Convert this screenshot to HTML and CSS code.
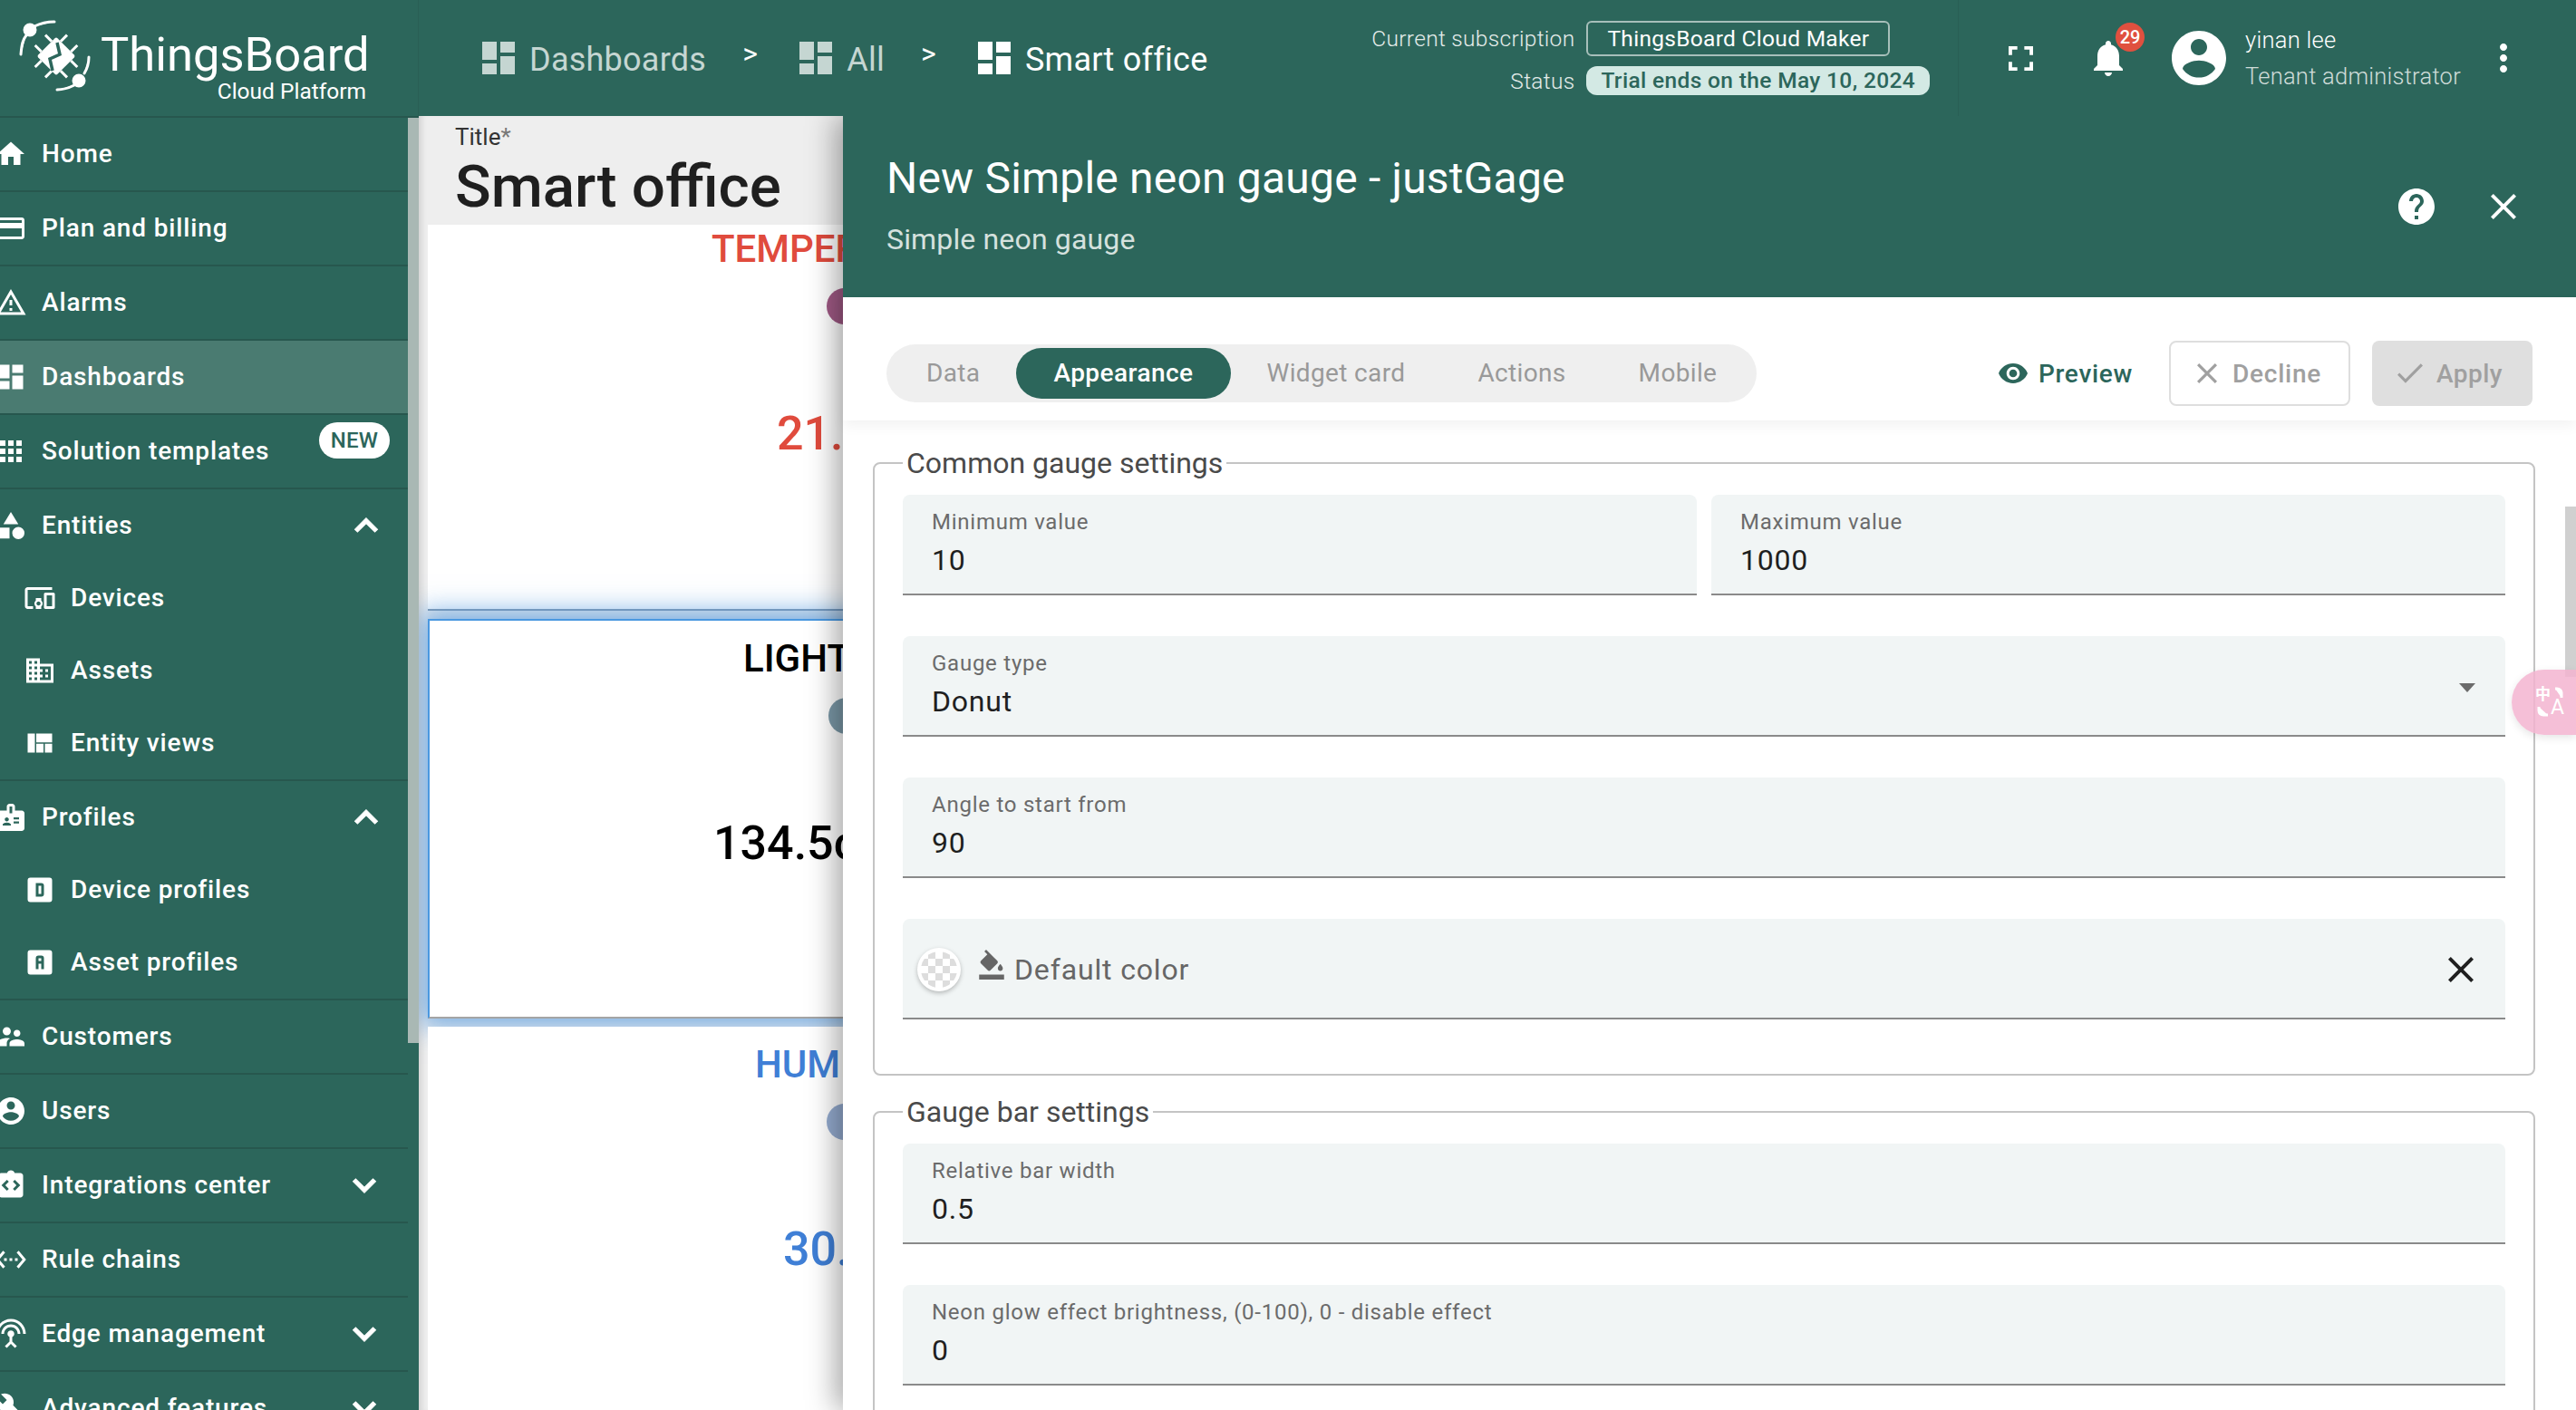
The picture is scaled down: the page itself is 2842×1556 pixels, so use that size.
FILE: index.html
```html
<!DOCTYPE html>
<html lang="en">
<head>
    <meta charset="UTF-8">
    <title>ThingsBoard - Smart office</title>
    <link rel="stylesheet" href="styles.css">
</head>
<body>
    <svg class="sprite" width="0" height="0">
        <symbol id="i-dashboard" viewBox="3 3 18 18"><path d="M3 13h8V3H3v10zm0 8h8v-6H3v6zm10 0h8V11h-8v10zm0-18v6h8V3h-8z"/></symbol>
        <symbol id="i-close" viewBox="0 0 24 24"><path d="M19 6.41 17.59 5 12 10.59 6.41 5 5 6.41 10.59 12 5 17.59 6.41 19 12 13.41 17.59 19 19 17.59 13.41 12z"/></symbol>
        <symbol id="i-up" viewBox="0 0 24 24"><path d="M12 8l-6 6 1.41 1.41L12 10.83l4.59 4.58L18 14z"/></symbol>
        <symbol id="i-down" viewBox="0 0 24 24"><path d="M16.59 8.59 12 13.17 7.41 8.59 6 10l6 6 6-6z"/></symbol>
    </svg>

    <header class="topbar">
        <div class="logo">
            <svg class="logo-mark" viewBox="0 0 78 78" fill="none" stroke="#fff" stroke-width="3">
                <path d="M38 2C30 2 22 4 16 7" stroke-linecap="round"/>
                <circle cx="11" cy="11" r="6"/>
                <path d="M7 17C3 22 2 27 1 38" stroke-linecap="round"/>
                <path d="M76 41C76 48 74 54 71 59" stroke-linecap="round"/>
                <circle cx="65" cy="67" r="6"/>
                <path d="M60 72C54 75 48 77 41 77" stroke-linecap="round"/>
                <g transform="rotate(45 40 40)">
                    <rect x="25" y="25" width="30" height="30" rx="2" fill="#fff" stroke="none"/>
                    <path d="M32 15v10M48 15v10M32 55v10M48 55v10M15 32h10M15 48h10M55 32h10M55 48h10"/>
                </g>
                <path d="M41 25l3 13-11 5 3 13" stroke="#2c665b" stroke-width="3.500"/>
            </svg>
            <div class="logo-text">
                <div class="logo-name">ThingsBoard</div>
                <div class="logo-sub">Cloud Platform</div>
            </div>
        </div>
        <nav class="crumbs">
            <svg class="crumb-icon"><use href="#i-dashboard"/></svg>
            <span class="crumb">Dashboards</span>
            <span class="crumb-sep">&gt;</span>
            <svg class="crumb-icon"><use href="#i-dashboard"/></svg>
            <span class="crumb">All</span>
            <span class="crumb-sep">&gt;</span>
            <svg class="crumb-icon current"><use href="#i-dashboard"/></svg>
            <span class="crumb current">Smart office</span>
        </nav>
        <div class="subscription">
            <span class="sub-label">Current subscription</span>
            <span class="sub-plan">ThingsBoard Cloud Maker</span>
            <span class="sub-label">Status</span>
            <span class="sub-status">Trial ends on the May 10, 2024</span>
        </div>
        <div class="userbar">
            <svg class="fullscreen" viewBox="5 5 14 14"><path d="M7 14H5v5h5v-2H7v-3zm-2-4h2V7h3V5H5v5zm12 7h-3v2h5v-5h-2v3zM14 5v2h3v3h2V5h-5z"/></svg>
            <div class="bell">
                <svg viewBox="0 0 24 24"><path d="M12 22c1.1 0 2-.9 2-2h-4c0 1.1.89 2 2 2zm6-6v-5c0-3.07-1.64-5.64-4.5-6.32V4c0-.83-.67-1.5-1.5-1.5s-1.5.67-1.5 1.5v.68C7.63 5.36 6 7.92 6 11v5l-2 2v1h16v-1l-2-2z"/></svg>
                <span class="bell-count">29</span>
            </div>
            <svg class="avatar" viewBox="0 0 24 24"><path d="M12 2C6.48 2 2 6.48 2 12s4.48 10 10 10 10-4.48 10-10S17.52 2 12 2zm0 3c1.66 0 3 1.34 3 3s-1.34 3-3 3-3-1.34-3-3 1.34-3 3-3zm0 14.2c-2.5 0-4.71-1.28-6-3.22.03-1.99 4-3.08 6-3.08 1.99 0 5.97 1.09 6 3.08-1.29 1.94-3.5 3.22-6 3.22z"/></svg>
            <div class="user">
                <div class="user-name">yinan lee</div>
                <div class="user-role">Tenant administrator</div>
            </div>
            <svg class="more" viewBox="0 0 24 24"><path d="M12 8c1.1 0 2-.9 2-2s-.9-2-2-2-2 .9-2 2 .9 2 2 2zm0 2c-1.1 0-2 .9-2 2s.9 2 2 2 2-.9 2-2-.9-2-2-2zm0 6c-1.1 0-2 .9-2 2s.9 2 2 2 2-.9 2-2-.9-2-2-2z"/></svg>
        </div>
    </header>

    <div class="layout">
        <aside class="sidebar">
            <div class="side-scroll"></div>
            <a class="row line"><svg class="ico" viewBox="0 0 24 24"><path d="M10 20v-6h4v6h5v-8h3L12 3 2 12h3v8z"/></svg>Home</a>
            <a class="row line"><svg class="ico" viewBox="0 0 24 24"><path d="M20 4H4c-1.11 0-1.99.89-1.99 2L2 18c0 1.11.89 2 2 2h16c1.11 0 2-.89 2-2V6c0-1.11-.89-2-2-2zm0 14H4v-6h16v6zm0-10H4V6h16v2z"/></svg>Plan and billing</a>
            <a class="row line"><svg class="ico" viewBox="0 0 24 24"><path d="M12 5.99 19.53 19H4.47L12 5.99M12 2 1 21h22L12 2zm1 14h-2v2h2v-2zm0-6h-2v4h2v-4z"/></svg>Alarms</a>
            <a class="row line active"><svg class="ico" viewBox="0 0 24 24"><path d="M3 13h8V3H3v10zm0 8h8v-6H3v6zm10 0h8V11h-8v10zm0-18v6h8V3h-8z"/></svg>Dashboards</a>
            <a class="row line"><svg class="ico" viewBox="0 0 36 36"><path d="M-3 6h6v6h-6zM6 6h6v6H6zM15 6h6v6h-6zM24 6h6v6h-6zM-3 15h6v6h-6zM6 15h6v6H6zM15 15h6v6h-6zM24 15h6v6h-6zM-3 24h6v6h-6zM6 24h6v6H6zM15 24h6v6h-6zM24 24h6v6h-6z"/></svg>Solution templates<span class="badge-new">NEW</span></a>

            <div class="group line">
                <a class="row"><svg class="ico" viewBox="0 0 24 24"><path d="M12 2l-5.500 9h11zM17.500 13a4.500 4.500 0 1 0 0 9 4.500 4.500 0 0 0 0-9zM3 13.500h8v8H3z"/></svg>Entities<svg class="chev up"><use href="#i-up"/></svg></a>
                <a class="row sub"><svg class="ico" viewBox="0 0 24 24"><path d="M3 6h18V4H3c-1.100 0-2 .9-2 2v12c0 1.100.9 2 2 2h4v-2H3V6zm10 6H9v1.780c-.61.55-1 1.330-1 2.220s.39 1.670 1 2.220V20h4v-1.780c.61-.55 1-1.340 1-2.220s-.39-1.670-1-2.220V12zm-2 5.500c-.83 0-1.500-.67-1.500-1.500s.67-1.500 1.500-1.500 1.500.67 1.500 1.500-.67 1.500-1.500 1.500zM22 8h-6c-.5 0-1 .5-1 1v10c0 .5.5 1 1 1h6c.5 0 1-.5 1-1V9c0-.5-.5-1-1-1zm-1 10h-4v-8h4v8z"/></svg>Devices</a>
                <a class="row sub"><svg class="ico" viewBox="0 0 24 24"><path d="M12 7V3H2v18h20V7H12zM6 19H4v-2h2v2zm0-4H4v-2h2v2zm0-4H4V9h2v2zm0-4H4V5h2v2zm4 12H8v-2h2v2zm0-4H8v-2h2v2zm0-4H8V9h2v2zm0-4H8V5h2v2zm10 12h-8v-2h2v-2h-2v-2h2v-2h-2V9h8v10zm-2-8h-2v2h2v-2zm0 4h-2v2h2v-2z"/></svg>Assets</a>
                <a class="row sub"><svg class="ico" viewBox="0 0 24 24"><path d="M21 5v6.500H9.330V5H21zm-6.330 14v-6.500H9.330V19h5.340zm1-6.500V19H21v-6.500h-5.330zM8.330 19V5H3v14h5.330z"/></svg>Entity views</a>
            </div>

            <div class="group line">
                <a class="row"><svg class="ico" viewBox="0 0 24 24"><path d="M20 7h-5V4c0-1.100-.9-2-2-2h-2c-1.100 0-2 .9-2 2v3H4c-1.100 0-2 .9-2 2v11c0 1.100.9 2 2 2h16c1.100 0 2-.9 2-2V9c0-1.100-.9-2-2-2zM9 12c.83 0 1.500.67 1.500 1.500S9.830 15 9 15s-1.500-.67-1.500-1.500S8.170 12 9 12zm3 6H6v-.75c0-1 2-1.500 3-1.500s3 .5 3 1.500V18zm1-9h-2V4h2v5zm5 7.500h-4V15h4v1.500zm0-3h-4V12h4v1.500z"/></svg>Profiles<svg class="chev up"><use href="#i-up"/></svg></a>
                <a class="row sub"><svg class="ico" viewBox="0 0 24 24"><path fill-rule="evenodd" d="M9 7V17H13A2 2 0 0 0 15 15V9A2 2 0 0 0 13 7H9M11 9H13V15H11V9M5 3H19A2 2 0 0 1 21 5V19A2 2 0 0 1 19 21H5A2 2 0 0 1 3 19V5A2 2 0 0 1 5 3Z"/></svg>Device profiles</a>
                <a class="row sub"><svg class="ico" viewBox="0 0 24 24"><path fill-rule="evenodd" d="M11 7A2 2 0 0 0 9 9V17H11V13H13V17H15V9A2 2 0 0 0 13 7H11M11 9H13V11H11V9M5 3H19A2 2 0 0 1 21 5V19A2 2 0 0 1 19 21H5A2 2 0 0 1 3 19V5A2 2 0 0 1 5 3Z"/></svg>Asset profiles</a>
            </div>

            <a class="row line"><svg class="ico" viewBox="0 0 24 24"><path d="M16.500 12c1.380 0 2.490-1.120 2.490-2.500S17.880 7 16.500 7C15.120 7 14 8.120 14 9.500s1.120 2.500 2.500 2.500zM9 11c1.660 0 2.990-1.340 2.990-3S10.660 5 9 5C7.340 5 6 6.340 6 8s1.340 3 3 3zm7.500 3c-1.830 0-5.500.92-5.500 2.750V19h11v-2.250c0-1.830-3.670-2.750-5.500-2.750zM9 13c-2.330 0-7 1.170-7 3.500V19h7v-2.250c0-.85.33-2.340 2.370-3.470C10.500 13.100 9.660 13 9 13z"/></svg>Customers</a>
            <a class="row line"><svg class="ico" viewBox="0 0 24 24"><path d="M12 2C6.480 2 2 6.480 2 12s4.480 10 10 10 10-4.480 10-10S17.520 2 12 2zm0 3c1.660 0 3 1.340 3 3s-1.340 3-3 3-3-1.340-3-3 1.340-3 3-3zm0 14.200c-2.500 0-4.710-1.280-6-3.220.03-1.990 4-3.080 6-3.080 1.990 0 5.970 1.090 6 3.080-1.290 1.940-3.500 3.220-6 3.220z"/></svg>Users</a>
            <a class="row line"><svg class="ico" viewBox="0 0 24 24"><path fill-rule="evenodd" d="M19 3h-4.180C14.400 1.840 13.300 1 12 1s-2.400.84-2.820 2H5c-1.100 0-2 .9-2 2v14c0 1.100.9 2 2 2h14c1.100 0 2-.9 2-2V5c0-1.100-.9-2-2-2zM10.500 14.600 9.100 16l-4-4 4-4 1.400 1.400L7.900 12zm3 0 2.600-2.600-2.600-2.600L14.900 8l4 4-4 4z"/></svg>Integrations center<svg class="chev"><use href="#i-down"/></svg></a>
            <a class="row line"><svg class="ico" viewBox="0 0 24 24"><path d="M7.770 6.760 6.230 5.480.82 12l5.410 6.520 1.540-1.280L3.420 12l4.350-5.240zM7 13h2v-2H7v2zm10-2h-2v2h2v-2zm-6 2h2v-2h-2v2zm6.770-7.520-1.540 1.280L20.580 12l-4.350 5.240 1.540 1.280L23.180 12l-5.410-6.520z"/></svg>Rule chains</a>
            <a class="row line"><svg class="ico" viewBox="0 0 24 24"><path d="M12 5c-3.870 0-7 3.130-7 7h2c0-2.760 2.240-5 5-5s5 2.240 5 5h2c0-3.870-3.130-7-7-7zm1 9.290c.88-.39 1.500-1.260 1.500-2.290 0-1.380-1.120-2.500-2.500-2.500S9.500 10.620 9.500 12c0 1.020.62 1.900 1.500 2.290v3.300L7.590 21 9 22.410l3-3 3 3L16.410 21 13 17.590v-3.300zM12 1C5.930 1 1 5.930 1 12h2c0-4.970 4.030-9 9-9s9 4.030 9 9h2c0-6.070-4.930-11-11-11z"/></svg>Edge management<svg class="chev"><use href="#i-down"/></svg></a>
            <a class="row line"><svg class="ico" viewBox="0 0 24 24"><path d="M22.700 19l-9.100-9.100c.9-2.300.4-5-1.500-6.900-2-2-5-2.400-7.400-1.300L9 6 6 9 1.600 4.700C.4 7.100.9 10.100 2.900 12.100c1.900 1.900 4.600 2.400 6.900 1.500l9.100 9.100c.4.4 1 .4 1.400 0l2.300-2.300c.5-.4.5-1.100.1-1.400z"/></svg>Advanced features<svg class="chev"><use href="#i-down"/></svg></a>
        </aside>

        <main class="board">
            <div class="board-title">
                <div class="board-label">Title<span class="req">*</span></div>
                <div class="board-name">Smart office</div>
            </div>
            <div class="widgets">
                <section class="widget temp">
                    <div class="w-title">TEMPERATURE</div>
                    <div class="w-dot"></div>
                    <div class="w-value">21.6</div>
                </section>
                <section class="widget light">
                    <div class="w-title">LIGHT</div>
                    <div class="w-dot"></div>
                    <div class="w-value">134.5cd</div>
                </section>
                <section class="widget hum">
                    <div class="w-title">HUMIDITY</div>
                    <div class="w-dot"></div>
                    <div class="w-value">30.5</div>
                </section>
            </div>
        </main>

        <section class="panel">
            <div class="panel-head">
                <div class="panel-titles">
                    <div class="panel-title">New Simple neon gauge - justGage</div>
                    <div class="panel-sub">Simple neon gauge</div>
                </div>
                <svg class="head-btn help" viewBox="0 0 24 24"><path d="M12 2C6.480 2 2 6.480 2 12s4.480 10 10 10 10-4.480 10-10S17.520 2 12 2zm1 17h-2v-2h2v2zm2.070-7.750-.9.92C13.450 12.900 13 13.500 13 15h-2v-.5c0-1.100.45-2.100 1.170-2.830l1.240-1.260c.37-.36.59-.86.59-1.410 0-1.100-.9-2-2-2s-2 .9-2 2H8c0-2.210 1.790-4 4-4s4 1.790 4 4c0 .88-.36 1.680-.93 2.250z"/></svg>
                <svg class="head-btn"><use href="#i-close"/></svg>
            </div>

            <div class="toolbar">
                <div class="tabs">
                    <span class="tab">Data</span>
                    <span class="tab selected">Appearance</span>
                    <span class="tab">Widget card</span>
                    <span class="tab">Actions</span>
                    <span class="tab">Mobile</span>
                </div>
                <button class="btn preview" type="button">
                    <svg viewBox="1 4.500 22 15"><path d="M12 4.500C7 4.500 2.730 7.610 1 12c1.730 4.390 6 7.500 11 7.500s9.270-3.110 11-7.500c-1.730-4.390-6-7.500-11-7.500zM12 17c-2.760 0-5-2.240-5-5s2.240-5 5-5 5 2.240 5 5-2.240 5-5 5zm0-8c-1.660 0-3 1.340-3 3s1.340 3 3 3 3-1.340 3-3-1.340-3-3-3z"/></svg>
                    Preview
                </button>
                <button class="btn decline" type="button">
                    <svg viewBox="5 5 14 14"><path d="M19 6.410 17.590 5 12 10.590 6.410 5 5 6.410 10.590 12 5 17.590 6.410 19 12 13.410 17.590 19 19 17.590 13.410 12z"/></svg>
                    Decline
                </button>
                <button class="btn apply" type="button">
                    <svg viewBox="3.400 5.600 17.600 13.400"><path d="M9 16.170 4.830 12l-1.420 1.410L9 19 21 7l-1.410-1.410z"/></svg>
                    Apply
                </button>
            </div>

            <div class="settings">
                <fieldset class="group-box">
                    <legend>Common gauge settings</legend>
                    <div class="two-col">
                        <div class="field"><label>Minimum value</label><div class="val">10</div></div>
                        <div class="field"><label>Maximum value</label><div class="val">1000</div></div>
                    </div>
                    <div class="field select">
                        <label>Gauge type</label><div class="val">Donut</div>
                        <span class="caret"></span>
                    </div>
                    <div class="field"><label>Angle to start from</label><div class="val">90</div></div>
                    <div class="field color">
                        <span class="swatch"><span class="swatch-in"></span></span>
                        <svg class="bucket" viewBox="2 0 20 24"><path d="M16.560 8.940 7.620 0 6.210 1.410l2.380 2.380-5.150 5.150c-.59.59-.59 1.540 0 2.120l5.500 5.500c.29.29.68.44 1.060.44s.77-.15 1.060-.44l5.500-5.500c.59-.58.59-1.530 0-2.120zM19 11.500s-2 2.170-2 3.500c0 1.100.9 2 2 2s2-.9 2-2c0-1.330-2-3.500-2-3.500zM2 20h20v4H2v-4z"/></svg>
                        <span class="color-name">Default color</span>
                        <svg class="color-clear"><use href="#i-close"/></svg>
                    </div>
                </fieldset>

                <fieldset class="group-box">
                    <legend>Gauge bar settings</legend>
                    <div class="field"><label>Relative bar width</label><div class="val">0.5</div></div>
                    <div class="field"><label>Neon glow effect brightness, (0-100), 0 - disable effect</label><div class="val">0</div></div>
                </fieldset>
            </div>

            <div class="panel-scroll"></div>
            <div class="translate">
                <span class="translate-zh">中</span>
                <span class="translate-en">A</span>
                <svg class="translate-arcs" viewBox="0 0 72 72" fill="none" stroke="#fff" stroke-width="3"><path d="M48 21h2c3 0 5 2 5 5v5M30 41v4c0 3 2 5 5 5h5"/></svg>
            </div>
        </section>
    </div>
</body>
</html>
```

FILE: styles.css
```css
* {
    box-sizing: border-box;
}
html, body {
    margin: 0;
    height: 100%;
}
body {
    width: 2842px;
    height: 1556px;
    overflow: hidden;
    font-family: Roboto, "Noto Sans", sans-serif;
    background: #eee;
    color: #1f1f1f;
}
svg {
    fill: currentColor;
    flex: none;
    display: block;
}
.sprite {
    position: absolute;
}

/* top bar */
.topbar {
    height: 128px;
    display: flex;
    align-items: center;
    background: #2c665b;
    color: #fff;
}
.logo {
    width: 462px;
    height: 100%;
    flex: none;
    display: flex;
    align-items: flex-start;
    padding: 22px 0 0 22px;
    border-right: 1px solid #295f55;
}
.logo-mark {
    width: 78px;
    height: 78px;
    overflow: visible;
}
.logo-text {
    margin-left: 11px;
    width: 293px;
    text-align: right;
}
.logo-name {
    font-size: 52.500px;
    line-height: 60px;
    margin-top: 8px;
    text-align: left;
}
.logo-sub {
    font-size: 24.500px;
    line-height: 27px;
    margin-top: -3px;
}
.crumbs {
    display: flex;
    align-items: center;
    padding-left: 70px;
    color: #c5d6d2;
}
.crumb-icon {
    width: 36px;
    height: 36px;
}
.crumb {
    font-size: 36px;
    margin: 3px 0 0 16px;
    letter-spacing: .25px;
}
.crumb.current, .crumb-icon.current {
    color: #fff;
}
.crumb-sep {
    width: 20px;
    font-size: 32px;
    margin: -10px 43px 0 40px;
    color: #fff;
}
.subscription {
    margin-left: auto;
    display: grid;
    grid-template-columns: auto auto;
    align-items: center;
    column-gap: 13px;
    row-gap: 11px;
    padding-right: 31px;
    font-size: 24.500px;
}
.sub-label {
    justify-self: end;
    font-weight: 300;
    color: #e4ecea;
    letter-spacing: .3px;
}
.sub-plan {
    justify-self: start;
    height: 39px;
    line-height: 35px;
    padding: 0 21px;
    border: 2px solid #a7bfba;
    border-radius: 6px;
    letter-spacing: .3px;
}
.sub-status {
    height: 32px;
    line-height: 32px;
    padding: 0 16px;
    border-radius: 12px;
    background: #d3e9e4;
    color: #2c665b;
    font-weight: 500;
    letter-spacing: .35px;
}
.userbar {
    width: 682px;
    height: 100%;
    flex: none;
    display: flex;
    align-items: center;
    padding-left: 55px;
    border-left: 1px solid #295f55;
}
.fullscreen {
    width: 27px;
    height: 27px;
}
.bell {
    position: relative;
    margin-left: 59px;
    width: 48px;
    height: 48px;
}
.bell svg {
    width: 48px;
    height: 48px;
}
.bell-count {
    position: absolute;
    top: -15px;
    left: 32px;
    width: 32px;
    height: 32px;
    border-radius: 50%;
    background: #e0503f;
    font-size: 20px;
    font-weight: 500;
    line-height: 32px;
    text-align: center;
}
.avatar {
    width: 72px;
    height: 72px;
    margin-left: 40px;
}
.user {
    margin-left: 15px;
    font-weight: 300;
    font-size: 25.500px;
}
.user-name {
    line-height: 36px;
    margin-bottom: 4px;
    letter-spacing: .3px;
}
.user-role {
    line-height: 36px;
    color: #cfdcd9;
    letter-spacing: .25px;
}
.more {
    width: 48px;
    height: 48px;
    margin-left: 23px;
}

/* body columns */
.layout {
    height: 1428px;
    display: flex;
    overflow: hidden;
}

/* sidebar */
.sidebar {
    position: relative;
    width: 462px;
    flex: none;
    padding-right: 12px;
    background: #2c665b;
    color: #fff;
    border-top: 2px solid #27574e;
    overflow: hidden;
}
.side-scroll {
    position: absolute;
    top: 0;
    right: 0;
    width: 12px;
    height: 1021px;
    background: #a9b8b4;
}
.row {
    height: 80px;
    display: flex;
    align-items: center;
    padding-bottom: 1px;
    font-size: 28px;
    font-weight: 500;
    letter-spacing: .85px;
}
.row .ico {
    width: 36px;
    height: 36px;
    margin: 0 16px 0 -6px;
    overflow: visible;
}
.row.sub {
    padding-left: 26px;
}
.row.sub .ico {
    margin: 0 16px 0 0;
}
.line {
    border-bottom: 2px solid #27574e;
}
.row.line {
    height: 82px;
}
.row.active {
    background: #4a7b71;
}
.chev {
    width: 50px;
    height: 50px;
    margin-left: auto;
    margin-right: 23px;
    stroke: currentColor;
    stroke-width: .5px;
}
.chev.up {
    margin-right: 21px;
}
.badge-new {
    margin: -24px 20px 0 auto;
    width: 78px;
    height: 40px;
    border-radius: 20px;
    background: #fff;
    color: #2c665b;
    font-size: 24px;
    line-height: 40px;
    text-align: center;
    letter-spacing: .3px;
}

/* dashboard behind the panel */
.board {
    width: 468px;
    flex: none;
    overflow: hidden;
    padding-left: 10px;
    box-shadow: inset 7px 0 6px -4px rgba(0, 0, 0, .12);
}
.board-title {
    height: 120px;
    padding-left: 30px;
}
.board-label {
    font-size: 26px;
    line-height: 32px;
    padding-top: 7px;
    color: #333;
    height: 39px;
}
.req {
    color: #777;
}
.board-name {
    font-size: 65.500px;
    font-weight: 500;
    line-height: 78px;
    white-space: nowrap;
}
.widgets {
    display: flex;
    flex-direction: column;
    gap: 9px;
    height: 1308px;
}
.widget {
    flex: none;
    width: 916px;
    background: #fff;
    padding-top: 16px;
    white-space: nowrap;
}
.w-title {
    font-size: 42px;
    font-weight: 500;
    line-height: 50px;
}
.w-dot {
    width: 40px;
    height: 40px;
    margin-top: 18px;
    border-radius: 50%;
}
.w-value {
    font-size: 52px;
    font-weight: 500;
    line-height: 60px;
    margin-top: 91px;
}
.temp {
    height: 426px;
    padding-top: 2px;
    border-bottom: 2px solid #8a9db0;
    color: #e04b3d;
}
.temp .w-title { margin-left: 313px; }
.temp .w-dot { margin-left: 440px; background: #a05a85; }
.temp .w-value { margin-left: 385px; }
.light {
    position: relative;
    height: 441px;
    padding-top: 17px;
    border: 2px solid #4a98e0;
    border-bottom-color: #a4a4a4;
    box-shadow: 0 0 28px 8px rgba(60, 140, 220, .68);
    color: #000;
}
.light .w-title { margin-left: 346px; }
.light .w-dot { margin-left: 440px; background: #7b99a8; }
.light .w-value { margin-left: 313px; }
.hum {
    position: relative;
    height: 500px;
    padding-top: 17px;
    color: #3f7fd6;
}
.hum .w-title { margin-left: 361px; }
.hum .w-dot { margin-left: 440px; background: #95acd0; }
.hum .w-value { margin-left: 392px; }

/* widget config panel */
.panel {
    position: relative;
    flex: 1;
    background: #fff;
    box-shadow: -8px 0 30px rgba(0, 0, 0, .35);
}
.panel-head {
    height: 200px;
    display: flex;
    align-items: center;
    padding: 0 56px 0 48px;
    background: #2c665b;
    color: #fff;
}
.panel-titles {
    margin: -2px auto 0 0;
}
.panel-title {
    font-size: 48px;
    line-height: 56px;
    letter-spacing: .2px;
}
.panel-sub {
    font-size: 32px;
    line-height: 44px;
    margin-top: 17px;
    color: #d5e1de;
    letter-spacing: .15px;
}
.head-btn {
    width: 48px;
    height: 48px;
}
.help {
    margin-right: 48px;
}
.toolbar {
    position: relative;
    height: 136px;
    display: flex;
    align-items: center;
    padding: 32px 48px 0;
    background: #fff;
    box-shadow: 0 6px 14px rgba(0, 0, 0, .05);
}
.tabs {
    height: 64px;
    display: flex;
    padding: 4px;
    border-radius: 32px;
    background: #efefef;
    margin-right: auto;
}
.tab {
    height: 56px;
    padding: 0 40px;
    border-radius: 28px;
    font-size: 28px;
    line-height: 56px;
    letter-spacing: .35px;
    color: #999;
}
.tab.selected {
    padding: 0 41px;
    background: #2c665b;
    color: #fff;
    font-weight: 500;
    letter-spacing: .45px;
}
.btn {
    height: 72px;
    display: flex;
    align-items: center;
    border: 2px solid transparent;
    border-radius: 8px;
    background: none;
    font: 500 28px Roboto, "Noto Sans", sans-serif;
    letter-spacing: .45px;
}
.btn svg {
    width: 22px;
    height: 22px;
}
.preview {
    padding: 0;
    margin-right: 38px;
    color: #2c665b;
    letter-spacing: .7px;
}
.preview svg {
    width: 32px;
    height: 22px;
    margin-right: 12px;
}
.decline {
    width: 200px;
    padding-left: 29px;
    margin-right: 24px;
    border-color: #dedede;
    color: #a0a0a0;
    letter-spacing: .75px;
}
.decline svg {
    margin-right: 17px;
}
.apply {
    width: 177px;
    padding-left: 26px;
    background: #dfdfdf;
    color: #a0a0a0;
}
.apply svg {
    width: 28px;
    margin-right: 15px;
}
.settings {
    padding: 25px 45px 0 33px;
}
.group-box {
    margin: 0 0 18px;
    padding: 13px 31px 15px;
    border: 2px solid #c4c4c4;
    border-radius: 8px;
}
.group-box legend {
    margin-left: 0;
    padding: 0 4px;
    font-size: 32px;
    line-height: 44px;
    color: #4a4a4a;
}
.two-col {
    display: flex;
    gap: 16px;
}
.two-col .field {
    flex: 1;
}
.field {
    position: relative;
    height: 111px;
    margin-bottom: 45px;
    padding: 14px 32px 0;
    border-bottom: 2px solid #8a8a8a;
    border-radius: 8px 8px 0 0;
    background: #f1f5f5;
}
.field label {
    display: block;
    font-size: 24px;
    line-height: 32px;
    color: #6b6b6b;
    letter-spacing: .75px;
}
.val {
    font-size: 32px;
    line-height: 44px;
    margin-top: 4px;
    letter-spacing: .8px;
}
.caret {
    position: absolute;
    top: 52px;
    right: 33px;
    width: 0;
    height: 0;
    border: 9px solid transparent;
    border-top: 10px solid #6b6b6b;
    border-bottom: 0;
}
.field.color {
    display: flex;
    align-items: center;
    padding: 2px 25px 0 16px;
}
.swatch {
    width: 48px;
    height: 48px;
    padding: 4px;
    border-radius: 50%;
    background: #fff;
    box-shadow: 0 2px 5px rgba(0, 0, 0, .25);
}
.swatch-in {
    display: block;
    width: 40px;
    height: 40px;
    border-radius: 50%;
    background: repeating-conic-gradient(#ddd 0 25%, #fff 0 50%) 0 0 / 16px 16px;
}
.bucket {
    width: 32px;
    height: 33px;
    margin: -10px 9px 0 18px;
    color: #666;
}
.color-name {
    font-size: 32px;
    color: #666;
    letter-spacing: .85px;
}
.color-clear {
    width: 48px;
    height: 48px;
    margin-left: auto;
    color: #1f1f1f;
}
.panel-scroll {
    position: absolute;
    top: 431px;
    right: 0;
    width: 12px;
    height: 188px;
    background: #d0d0d0;
}
.translate {
    position: absolute;
    top: 611px;
    right: 0;
    width: 71px;
    height: 72px;
    display: flex;
    padding: 17px 0 0 26px;
    border-radius: 36px 0 0 36px;
    background: rgba(243, 180, 208, .85);
    box-shadow: 0 3px 10px rgba(0, 0, 0, .1);
    color: #fff;
    font-family: "Noto Sans CJK SC", sans-serif;
}
.translate-zh {
    font-size: 17px;
    line-height: 17px;
    font-weight: 700;
}
.translate-en {
    font-family: Roboto, sans-serif;
    font-size: 23px;
    line-height: 23px;
    margin-top: 13px;
}
.translate-arcs {
    position: absolute;
    top: 0;
    left: 0;
    width: 72px;
    height: 72px;
}
```
